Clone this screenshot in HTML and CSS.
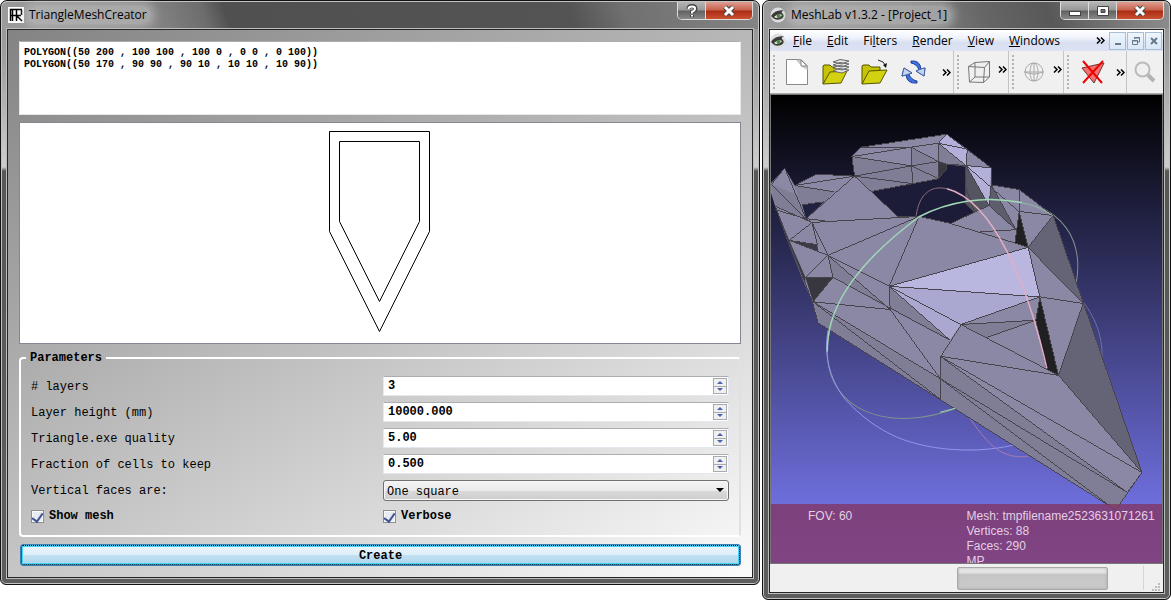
FILE: index.html
```html
<!DOCTYPE html>
<html lang="en">
<head>
<meta charset="utf-8">
<title>TriangleMeshCreator</title>
<link rel="stylesheet" href="styles.css">
</head>
<body>
<section class="window creator">
  <header class="titlebar">
    <svg class="app-icon" width="16" height="16" viewBox="0 0 16 16"><rect width="16" height="16" fill="#fff"/><path d="M2.5 14V2.5H14M4.500 14V3M2 8.500H13M8.500 3V14M13.500 3V8M9 9L14 14" fill="none" stroke="#000" stroke-width="1.500"/></svg>
    <h1 class="title">TriangleMeshCreator</h1>
    <div class="controls">
      <button class="ctl help" aria-label="Help"><svg width="12" height="14" viewBox="0 0 12 14"><path d="M2.500 5Q2.500 2 6 2T9.500 5Q9.500 6.500 6 8V9.500M6 11V13" fill="none" stroke="#444" stroke-width="4"/><path d="M2.500 5Q2.500 2.500 6 2.500T9 5Q9 6.500 6 8V9.500M6 11V12.500" fill="none" stroke="#fff" stroke-width="2"/></svg></button>
      <button class="ctl close" aria-label="Close"><svg width="14" height="12" viewBox="0 0 14 12"><path d="M3 2L11 10M11 2L3 10" stroke="#444" stroke-width="5"/><path d="M3 2L11 10M11 2L3 10" stroke="#fff" stroke-width="3"/></svg></button>
    </div>
  </header>
  <form class="client form">
    <textarea class="source" aria-label="Polygons">POLYGON((50 200 , 100 100 , 100 0 , 0 0 , 0 100))
POLYGON((50 170 , 90 90 , 90 10 , 10 10 , 10 90))</textarea>
    <div class="preview">
      <svg width="101" height="201" viewBox="0 0 101 201"><path d="M.5.5H100.500V100.500L50.500 200.500L.5 100.500ZM10.500 10.500H90.500V90.500L50.500 170.500L10.500 90.500Z" fill="none" stroke="#000"/></svg>
    </div>
    <fieldset class="params">
      <legend>Parameters</legend>
      <div class="grid">
        <label for="layers"># layers</label>
        <div class="spin"><input id="layers" type="text" value="3"><span class="steps"><button type="button" class="up" aria-label="More"></button><button type="button" class="down" aria-label="Less"></button></span></div>
        <label for="lheight">Layer height (mm)</label>
        <div class="spin"><input id="lheight" type="text" value="10000.000"><span class="steps"><button type="button" class="up" aria-label="More"></button><button type="button" class="down" aria-label="Less"></button></span></div>
        <label for="quality">Triangle.exe quality</label>
        <div class="spin"><input id="quality" type="text" value="5.00"><span class="steps"><button type="button" class="up" aria-label="More"></button><button type="button" class="down" aria-label="Less"></button></span></div>
        <label for="fraction">Fraction of cells to keep</label>
        <div class="spin"><input id="fraction" type="text" value="0.500"><span class="steps"><button type="button" class="up" aria-label="More"></button><button type="button" class="down" aria-label="Less"></button></span></div>
        <label for="faces">Vertical faces are:</label>
        <div class="combo"><select id="faces"><option>One square</option></select></div>
        <label class="check"><input type="checkbox" checked>Show mesh</label>
        <label class="check"><input type="checkbox" checked>Verbose</label>
      </div>
    </fieldset>
    <button type="button" class="create">Create</button>
  </form>
</section>

<section class="window meshlab">
  <header class="titlebar">
    <svg class="app-icon" width="16" height="16" viewBox="0 0 16 16"><circle cx="8" cy="8" r="7.500" fill="#ddd"/><path d="M1 9Q4 3 14 3Q10 5 13 7Q15 10 11 12Q6 14 3 11Z" fill="#3a3a3a"/><path d="M4 10Q8 6 12 8Q10 11 6 11Z" fill="#eee"/><circle cx="8.500" cy="9" r="2" fill="#4a8a35"/></svg>
    <h1 class="title">MeshLab v1.3.2 - [Project_1]</h1>
    <div class="controls">
      <button class="ctl" aria-label="Minimize"><svg width="14" height="12" viewBox="0 0 14 12"><rect x="1.500" y="6.500" width="11" height="4" fill="#fff" stroke="#444"/></svg></button>
      <button class="ctl" aria-label="Maximize"><svg width="14" height="12" viewBox="0 0 14 12"><path d="M1.500 1.500H12.500V10.500H1.500ZM5 4.500V7.500H9V4.500Z" fill="#fff" fill-rule="evenodd" stroke="#444"/></svg></button>
      <button class="ctl close" aria-label="Close"><svg width="14" height="12" viewBox="0 0 14 12"><path d="M3 2L11 10M11 2L3 10" stroke="#444" stroke-width="5"/><path d="M3 2L11 10M11 2L3 10" stroke="#fff" stroke-width="3"/></svg></button>
    </div>
  </header>
  <div class="client lab">
    <nav class="menubar">
      <svg class="menu-icon" width="16" height="16" viewBox="0 0 16 16"><circle cx="8" cy="8" r="7.500" fill="#ddd"/><path d="M1 9Q4 3 14 3Q10 5 13 7Q15 10 11 12Q6 14 3 11Z" fill="#3a3a3a"/><path d="M4 10Q8 6 12 8Q10 11 6 11Z" fill="#eee"/><circle cx="8.500" cy="9" r="2" fill="#4a8a35"/></svg>
      <button><u>F</u>ile</button>
      <button><u>E</u>dit</button>
      <button>Fi<u>l</u>ters</button>
      <button><u>R</u>ender</button>
      <button><u>V</u>iew</button>
      <button><u>W</u>indows</button>
      <button class="more menu-more" aria-label="More menus"><svg width="9" height="7" viewBox="0 0 9 7"><path d="M1 .5L4 3.500L1 6.500M5 .5L8 3.500L5 6.500" fill="none" stroke="#000" stroke-width="1.500"/></svg></button>
      <span class="mdi">
        <button aria-label="Minimize project"><svg width="10" height="10" viewBox="0 0 10 10"><path d="M2 8H8" stroke="#68798c" stroke-width="2"/></svg></button>
        <button aria-label="Restore project"><svg width="10" height="10" viewBox="0 0 10 10"><path d="M3.500 3V1.500H8.500V6H7M3 2H9M1.500 4.500H6.500V8.500H1.500ZM1 5H7" fill="none" stroke="#68798c"/></svg></button>
        <button aria-label="Close project"><svg width="10" height="10" viewBox="0 0 10 10"><path d="M2 2L8 8M8 2L2 8" stroke="#68798c" stroke-width="2"/></svg></button>
      </span>
    </nav>
    <div class="toolbar">
      <div class="group main">
        <i class="grip"></i>
        <button class="tool wide" aria-label="New"><svg width="28" height="30" viewBox="0 0 28 30"><path d="M3.500 2.500H18L24.500 9V27.500H3.500Z" fill="#fff" stroke="#888"/><path d="M13 3L19 10L24.500 13V9L18 2.500Z" fill="#c8c8c8"/><path d="M18 3V9H24Z" fill="#fff" stroke="#888"/></svg></button>
        <button class="tool wide" aria-label="Open project"><svg width="30" height="30" viewBox="0 0 30 30"><path d="M2 27V9L3 8H9L11 10H19V14" fill="#c6c400" stroke="#555500"/><path d="M2 27L9 15L26 14L20 26Z" fill="#d2d210" stroke="#555500"/><path d="M12 14L18 11.500L28 13L21 16ZM12 11L18 8.500L28 10L21 13ZM12 8L19 5.500L28 7L21 10ZM12 5L19 2.500L28 4L21 7Z" fill="#e8e8e8" stroke="#666"/></svg></button>
        <button class="tool wide" aria-label="Import mesh"><svg width="30" height="30" viewBox="0 0 30 30"><path d="M2 27V9L3 8H9L11 10H20V14" fill="#c6c400" stroke="#555500"/><path d="M2 27L9 14L27 13L20 26Z" fill="#d2d210" stroke="#555500"/><path d="M18 3Q24 4 26 9" fill="none" stroke="#222"/><path d="M23 8L26 11L27 6Z" fill="#111"/></svg></button>
        <button class="tool wide" aria-label="Reload"><svg width="28" height="30" viewBox="0 0 28 30"><path d="M11 4Q20 3 21 12L25 11L24 19L16 14L19 13Q17 7 11 6Z" fill="#3d72e0" stroke="#1c3e98"/><path d="M17 26Q7 27 6 18L2 19L4 11L12 16L9 17Q11 23 17 24Z" fill="#3d72e0" stroke="#1c3e98"/><path d="M21 12L25 11L24 19L16 14ZM6 18L2 19L4 11L12 16Z" fill="#c2d4f4" stroke="#4865a0"/></svg></button>
        <button class="more" aria-label="More file tools"><svg width="9" height="7" viewBox="0 0 9 7"><path d="M1 .5L4 3.500L1 6.500M5 .5L8 3.500L5 6.500" fill="none" stroke="#000" stroke-width="1.500"/></svg></button>
      </div>
      <div class="group">
        <i class="grip"></i>
        <button class="tool" aria-label="Bounding box"><svg width="26" height="28" viewBox="0 0 26 28"><path d="M2.500 8.500L18.500 9.500L17.500 24.500L3.500 24ZM2.500 8.500L9 4.500L23.500 3.500L18.500 9.500M23.500 3.500V19L17.500 24.500M9 4.500V19L23.500 19M9 19L3.500 24" fill="none" stroke="#777"/></svg></button>
        <button class="more raised" aria-label="More view tools"><svg width="9" height="7" viewBox="0 0 9 7"><path d="M1 .5L4 3.500L1 6.500M5 .5L8 3.500L5 6.500" fill="none" stroke="#000" stroke-width="1.500"/></svg></button>
      </div>
      <div class="group">
        <i class="grip"></i>
        <button class="tool" aria-label="Trackball"><svg width="24" height="24" viewBox="0 0 24 24"><g fill="none" stroke="#aaa"><circle cx="12" cy="12" r="9"/><ellipse cx="12" cy="12" rx="4" ry="9"/><path d="M3 12Q12 16 21 12"/><path d="M2 12H22M12 3V21"/></g></svg></button>
        <button class="more raised" aria-label="More trackball tools"><svg width="9" height="7" viewBox="0 0 9 7"><path d="M1 .5L4 3.500L1 6.500M5 .5L8 3.500L5 6.500" fill="none" stroke="#000" stroke-width="1.500"/></svg></button>
      </div>
      <div class="group">
        <i class="grip"></i>
        <button class="tool roomy" aria-label="Delete faces"><svg width="26" height="28" viewBox="0 0 26 28"><path d="M2 10L24 5L14 25Z" fill="#f57070" stroke="#6e3333"/><path d="M3 3L22 25M23 3L3 25" stroke="#f00000" stroke-width="2"/></svg></button>
        <button class="more" aria-label="More delete tools"><svg width="9" height="7" viewBox="0 0 9 7"><path d="M1 .5L4 3.500L1 6.500M5 .5L8 3.500L5 6.500" fill="none" stroke="#000" stroke-width="1.500"/></svg></button>
      </div>
      <div class="group last">
        <button class="tool" aria-label="Search"><svg width="24" height="24" viewBox="0 0 24 24"><circle cx="9.500" cy="9.500" r="7" fill="none" stroke="#bbb" stroke-width="2"/><path d="M15 15L21 21" stroke="#b3b3b3" stroke-width="4"/></svg></button>
      </div>
    </div>
    <div class="viewport">
      <svg class="mesh" viewBox="770 95 393 469" preserveAspectRatio="xMidYMin slice">
        <g fill="none">
          <ellipse cx="952.500" cy="309.500" rx="140" ry="90.400" transform="rotate(-35.400 952.500 309.500)" stroke="#7f938c"/>
          <path d="M828 330C822 360 833 385 845 400C865 422 890 438 915 444C935 450 985 457 1030 441" stroke="#9296ee"/>
          <path d="M1083 302C1097 320 1104 340 1102 362" stroke="#6f709b"/>
          <path d="M970 419C980 434 992 449 1004 454Q1018 460 1032 456" stroke="#a07cac"/>
        </g>
        <path fill="#8a88a5" d="M851.700 156.700L860.700 147.300L946.700 134.300L967.300 149.300L991.300 168V185L1019.300 189.700L1053.300 215.700L1083.300 304L1142.300 473.300L1116 510.700L940.300 400L817.700 323.300L812 302L804 284L787 241L775 207L770 191V184L784.300 168.300L794.300 185.700L816 174.300L854.300 176.300Z"/>
        <path d="M871 191.700L912.300 183.700L938.300 179L946.700 164.300L966 165.700L965 203L974.300 212.300L950.500 223.700L919 216.700H897.700Z" fill="#1c1c38"/>
        <path d="M801.700 205L824 202L805.700 219Z" fill="#20203f"/>
        <g fill="#7f7e96">
          <path d="M852 157L911 166L938.300 161.700V179L912.300 183.700L871 191.700L854.300 176.300Z"/>
          <path d="M911 147.300L938.300 161.700V179L912.300 183.700Z"/>
          <path d="M794.300 185.700L834 192L824 202L801.700 205Z"/>
          <path d="M770 184L798 195.700L805.700 219L775 206.700Z"/>
          <path d="M827.700 255.700L890 310L832.700 277.700ZM889 286.700L950 340.700L890 310ZM812.700 302.300L940.300 379.300V400L817.700 323.300Z"/>
          <path d="M940 356.700L1127.700 493.300L1116 510.700L940.300 400Z"/>
          <path d="M960.700 325L1036 320.700L987 338Z"/>
          <path d="M938.300 143.300L967 167L946.700 164.300L938.300 161.700Z"/>
        </g>
        <g fill="#646476">
          <path d="M1053.300 215.700L1028.300 247.700L1083.300 304ZM1083.300 304L1058.700 376L1142.300 473.300Z"/>
          <path d="M966 165.700L989 205.700L974.300 212.300L965 203Z" fill="#555461"/>
          <path d="M991 185L989 205.700L1016 230Z" fill="#5e5d6d"/>
        </g>
        <g fill="#b9b6e0">
          <path d="M946.700 134.300L967.300 149.300L966 165.700L938.300 143.300ZM967 166L991.300 168L989 205.700Z" fill="#b2afd8"/>
          <path d="M889 286.700L1028.300 247.700L1040 297.300Z"/>
          <path d="M889 286.700L1040 297.300L960.700 325L950 340.700Z" fill="#aaa8d0"/>
        </g>
        <g fill="#202023">
          <path d="M1019.300 211.700L1028.300 247.700L1015 243.300Z"/>
          <path d="M1040 297.300L1058.700 376L1046.700 370L1036 320.700Z"/>
          <path d="M805 277.700H832.700L812.700 302.300Z" fill="#383740"/>
          <path d="M789 240.700L817 245L818 252Z" fill="#3c3b45"/>
          <path d="M938.300 161.700L946.700 164.300V169L938.300 179Z" fill="#393840"/>
          <path d="M776 210L789 240.700L805 277.700V285L787 241Z" fill="#393840"/>
        </g>
        <g class="edges">
          <path d="M851.700 156.700L860.700 147.300L946.700 134.300L991.300 168V185L1019.300 189.700L1053.300 215.700L1142.300 473.300L1116 510.700L817.700 323.300L812 302L775 206.700M770 186L784.300 168.300L805.700 219L770 184M794.300 185.700L816 174.300L854.300 176.300L851.700 156.700"/>
          <path d="M851.700 156.700L911 147.300L938.300 143.300L946.700 134.300M911 147.300L912.300 183.700M911 147.300L938.300 161.700L911.700 166L851.700 156.700M911 147.300L860.700 148M854.300 176.300L911.700 166L938.300 179M854.300 176.300L912 183.700M938.300 143.300V179L946.700 169V164.300L938.300 161.700M871 191.700L938.300 179"/>
          <path d="M938.300 143.300L966 165.700L946.700 164.300M938.300 143.300L967.300 149.300L966 165.700L991.300 168M966 165.700L1019 211.700M966 165.700L989 205.700L991.300 185M965 185L974.300 212.300M966 165.700L965 203L974.300 212.300M991.300 185L1016 230M989 205.700L1016 230M989 205.700L950.700 223.700L919 216.700"/>
          <path d="M1019.300 189.700V211.700L1015 243.300L1028.300 247.700L1019.300 211.700L1053.300 215.700L1028.300 247.700L1083.300 304L1040 297.300L1028.300 247.700L889 286.700L919 216.700L827.700 255.700M950 223.700L1015 243.300M980 232L1016 230"/>
          <path d="M854.300 176.300L805.700 219L811.700 222.700L919 216.700H897.700L854.300 176.300M794.300 185.700L854.300 176.300M794.300 185.700L834 192M801.700 205L824 202M775 206.700L811.700 222.700L789 240.700M775 210L805.700 219L825 221M811.700 222.700L827.700 255.700L789 240.700L817 245L811.700 222.700M827.700 255.700L805 277.700H832.700L812.700 302.300L890 310M827.700 255.700L832.700 277.700L950 340.700"/>
          <path d="M827.700 255.700L889 286.700L890 310L827.700 255.700M889 286.700L1040 297.300L960.700 325L889 286.700L950 340.700M890 310L940.300 379.300L812.700 302.300L940.300 400V356.700L960.700 325L1036 320.700L987 338M960.700 325L1058.700 376L940 356.700L1142.300 473.300L1058.700 376L1083.300 304M940 356.700L1127.700 493.300L940.300 379.300L1109 506M1142.300 473.300L1127.700 493.300M1040 297.300L1036 320.700L1046.700 370L1058.700 376L1040 297.300"/>
        </g>
        <g fill="none">
          <path d="M827 352C826 300 868 255 919 217C947 202 985 195 1022 203" stroke="#9fd9b5" stroke-width="1.500"/>
          <path d="M1022 203Q1039 206 1053 216" stroke="#90bda2"/>
          <path d="M940 413L955 409" stroke="#9fd9b5"/>
          <path d="M916 216C919 195 930 185 947 189" stroke="#8d6c80"/>
          <path d="M947 189C993 201 1028 285 1047 369" stroke="#e2aec5" stroke-width="1.500"/>
        </g>
      </svg>
      <div class="info">
        <p>FOV: 60</p>
        <p>Mesh: tmpfilename2523631071261<br>Vertices: 88<br>Faces: 290<br>MP</p>
      </div>
    </div>
    <footer class="status">
      <div class="progress"></div>
      <i class="divider"></i>
      <svg class="resize" width="10" height="10" viewBox="0 0 10 10"><path d="M7 1h2v2h-2zM4 4h2v2h-2zM7 4h2v2h-2zM1 7h2v2h-2zM4 7h2v2h-2zM7 7h2v2h-2z" fill="#bbb"/></svg>
    </footer>
  </div>
</section>
</body>
</html>
```

FILE: styles.css
```css
* { box-sizing: border-box; }
body {
  margin: 0;
  min-height: 100vh;
  display: grid;
  grid-template-columns: 760fr 409fr;
  align-items: start;
  gap: 2px;
  background: #fff;
  font-family: "Open Sans", "Noto Sans", sans-serif;
  font-size: 12px;
  color: #000;
}
button { font: inherit; color: inherit; padding: 0; margin: 0; border: 0; background: none; }
svg { display: block; flex: none; }

.window {
  min-width: 0;
  display: flex;
  flex-direction: column;
  padding: 0 6px 6px;
  border: 1px solid #111;
  border-radius: 7px 7px 6px 6px;
  background: linear-gradient(#909090 0, #a0a0a0 60px, #cdcdcd 166px, #565856 170px, #5c5e5c 100%);
  box-shadow: inset 0 0 0 1px #c4c4c4;
}
.meshlab { min-height: 100vh; }

.titlebar {
  height: 28px;
  flex: none;
  display: flex;
  align-items: flex-start;
  margin: 0 -5px;
  padding: 0 5px;
  border-top: 1px solid #c4c4c4;
  border-radius: 6px 6px 0 0;
  background: linear-gradient(70deg, #9c9c9c 0, #858585 20%, #6d6d6d 27%, #505050 30%, #545454 75%, #707070 82%, #858585 100%);
}
.meshlab .titlebar { background: linear-gradient(70deg, #9c9c9c 0, #858585 35%, #656565 55%, #585858 70%, #808080 90%, #8d8d8d 100%); }
.app-icon { margin: 5px 4px 0 1px; }
.title {
  margin: 4px 0 0;
  padding: 0 4px 0 1px;
  font-size: 12px;
  font-weight: 400;
  line-height: 18px;
  white-space: nowrap;
  border-radius: 9px;
  background: rgba(190, 190, 190, .6);
  box-shadow: 0 0 8px 4px rgba(190, 190, 190, .6);
}
.controls {
  display: flex;
  margin-left: auto;
  border: 1px solid #ddd;
  border-top: 0;
  border-radius: 0 0 5px 5px;
  overflow: hidden;
}
.ctl {
  width: 28px;
  height: 17px;
  display: flex;
  align-items: center;
  justify-content: center;
  border-right: 1px solid #ddd;
  background: linear-gradient(#b5b5b5, #989898 48%, #606060 52%, #888);
}
.ctl.close { width: 46px; border-right: 0; background: linear-gradient(#dd9d90, #c8614b 48%, #a92b13 52%, #cc5030); }

.client {
  flex: 1;
  min-width: 0;
  border: 1px solid #262626;
  box-shadow: 0 0 0 1px #bdbdbd;
}

.form {
  display: flex;
  flex-direction: column;
  gap: 7px;
  padding: 11px 11px 11px 11px;
  background: linear-gradient(150deg, #838383, #fbfbfb);
  font-family: "Liberation Mono", "Courier New", monospace;
}
.source {
  display: block;
  width: 100%;
  height: 74px;
  margin: 0;
  padding: 5px 4px 4px;
  border: 1px solid #e3e9ef;
  border-top-color: #abadb3;
  background: #fff;
  color: #000;
  font: bold 10px/12px "Liberation Mono", "Courier New", monospace;
  resize: none;
}
.preview {
  height: 222px;
  display: flex;
  align-items: flex-start;
  justify-content: center;
  padding: 8px 2px 0 0;
  border: 1px solid #828790;
  background: #fff;
}
.params {
  min-width: 0;
  margin: 0;
  padding: 11px 10px 9px;
  border: 2px solid #fff;
  border-right-color: #dde2e8;
  border-radius: 4px;
}
.params legend {
  margin-left: -5px;
  padding: 0 4px;
  font-weight: bold;
  line-height: 14px;
}
.grid {
  display: grid;
  grid-template-columns: 1fr 1fr;
  grid-auto-rows: 20px;
  column-gap: 6px;
  row-gap: 6px;
  align-items: center;
}
.grid label { padding-top: 2px; line-height: 20px; white-space: nowrap; }
.spin {
  height: 20px;
  display: flex;
  padding: 1px;
  border: 1px solid #e3e9ef;
  border-top-color: #abadb3;
  background: #fff;
}
.spin input {
  flex: 1;
  min-width: 0;
  padding: 0 3px;
  border: 0;
  background: none;
  color: #000;
  font: bold 12px/16px "Liberation Mono", "Courier New", monospace;
}
.steps { width: 14px; display: flex; flex-direction: column; }
.steps button {
  flex: 1;
  display: flex;
  align-items: center;
  justify-content: center;
  border: 1px solid #a9abb0;
  background: #f0f0f0;
}
.steps .down { border-top: 0; }
.steps button::after {
  content: "";
  border: 3px solid transparent;
  border-top-width: 0;
  border-bottom-color: #4a62ab;
}
.steps .down::after { border-width: 3px 3px 0; border-color: #4a62ab transparent transparent; }
.combo { display: flex; position: relative; }
.combo::after {
  content: "";
  position: absolute;
  right: 5px;
  top: 8px;
  border: 4px solid transparent;
  border-top-color: #000;
  border-bottom: 0;
  pointer-events: none;
}
.combo select {
  appearance: none;
  width: 100%;
  height: 21px;
  padding: 2px 3px 0;
  border: 1px solid #707070;
  border-radius: 3px;
  background: linear-gradient(#f3f3f3, #ebebeb 50%, #dadada 52%, #cdcdcd);
  box-shadow: inset 0 0 0 1px #f8f8f8;
  color: #000;
  font: 12px/18px "Liberation Mono", "Courier New", monospace;
}
.grid .check { display: flex; align-items: center; gap: 5px; padding-top: 0; font-weight: bold; }
.check input {
  appearance: none;
  width: 13px;
  height: 13px;
  margin: 0;
  display: flex;
  align-items: flex-start;
  justify-content: center;
  border: 1px solid #8e8f8f;
  background: #e8ebf2;
  box-shadow: inset 0 0 0 1px #fafafa;
}
.check input:checked::after {
  content: "";
  width: 5px;
  height: 9px;
  border: solid #3f5597;
  border-width: 0 2px 2px 0;
  transform: rotate(35deg);
}
.create {
  height: 22px;
  margin-left: 1px;
  padding-top: 2px;
  border: 1px solid #3c7fb1;
  border-radius: 3px;
  outline: 1px dotted #000;
  outline-offset: -2px;
  background: linear-gradient(#eef7fc, #dceef8 50%, #c1e0f1 52%, #abd5ed);
  box-shadow: inset 0 0 0 2px #48d2f8;
  font-weight: bold;
}

.lab { display: flex; flex-direction: column; background: #f0f0f0; }
.menubar {
  height: 21px;
  display: flex;
  align-items: center;
  gap: 15px;
  padding-right: 1px;
  background: linear-gradient(#fff, #eef1fa 40%, #d8dff1 60%, #dde3f3);
}
.menu-icon { margin-right: -8px; }
.menubar button { line-height: 18px; }
.menubar .menu-more { margin-left: auto; margin-right: -12px; width: 11px; }
.mdi { display: flex; gap: 1px; }
.mdi button {
  width: 17px;
  height: 18px;
  display: flex;
  align-items: center;
  justify-content: center;
  border: 1px solid #a9bdd4;
  background: linear-gradient(#eef5fc, #dae8f6);
}
.toolbar { height: 43px; display: flex; border-bottom: 1px solid #aaa; }
.group {
  display: flex;
  align-items: center;
  padding-left: 3px;
  border-right: 1px solid #c4c4c4;
}
.group.main { flex: 1; min-width: 0; }
.group.last { padding: 0; border: 0; }
.grip {
  width: 4px;
  height: 34px;
  background: repeating-linear-gradient(#b4b4b4 0 2px, transparent 2px 4px) left / 2px 100% no-repeat;
}
.tool { width: 36px; display: flex; justify-content: center; }
.tool.wide { width: 39px; }
.tool.roomy { width: 44px; }
.more { width: 11px; display: flex; justify-content: center; align-items: center; }
.more.raised { padding-bottom: 6px; }
.group.main .more { margin-left: auto; margin-right: 1px; }

.viewport {
  flex: 1;
  min-height: 300px;
  position: relative;
  overflow: hidden;
  border: 1px solid #777;
  background: linear-gradient(#000, #7e7efc);
}
.mesh { position: absolute; inset: 0; width: 100%; height: 100%; }
.edges { fill: none; stroke: #46434b; stroke-width: 1; shape-rendering: crispEdges; }
.info {
  position: absolute;
  inset: auto 0 0;
  height: 59px;
  display: grid;
  grid-template-columns: 1fr 1fr;
  padding-top: 5px;
  overflow: hidden;
  background: rgba(130, 50, 92, .75);
  color: #e4cfe4;
  font: 12px/15px "Liberation Sans", Arial, sans-serif;
}
.info p { margin: 0; white-space: nowrap; }
.info p:first-child { padding-left: 37px; }
.status {
  height: 28px;
  flex: none;
  display: flex;
  align-items: center;
  justify-content: flex-end;
  padding-right: 2px;
}
.progress {
  width: 151px;
  height: 23px;
  border: 1px solid #a8a8a8;
  border-radius: 2px;
  background: linear-gradient(#f0f0f0, #dcdcdc 25%, #c6c6c6 30%, #cacaca);
  box-shadow: inset 0 0 3px #aaa;
}
.divider { width: 1px; height: 24px; margin: 0 7px 0 35px; background: #d5d5d5; }
.resize { align-self: flex-end; }
```
